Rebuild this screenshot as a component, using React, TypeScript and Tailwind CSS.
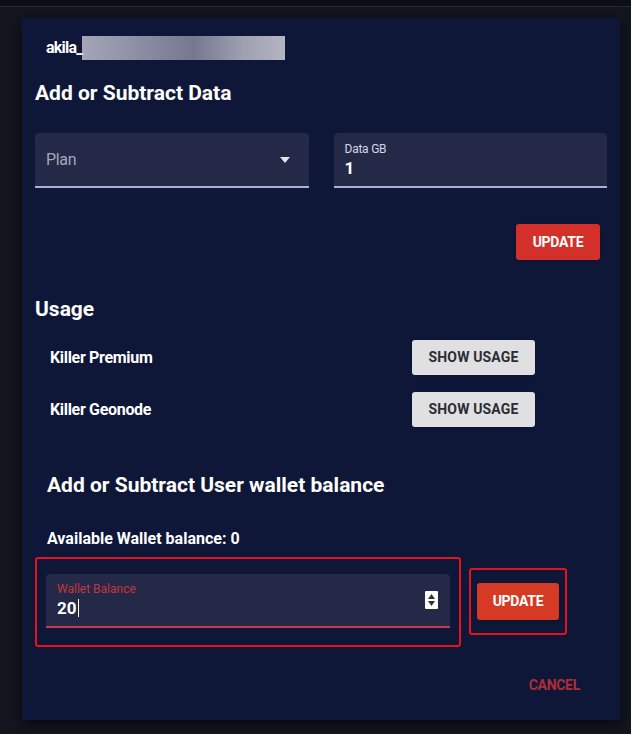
const usage = ["Killer Premium", "Killer Geonode"];

function Spinner() {
  return (
    <div className="flex h-[18px] w-[13px] flex-col items-center justify-center gap-[2px] rounded-[1px] bg-white">
      <svg width="7" height="5" viewBox="0 0 7 5">
        <path d="M3.5 0L7 5H0z" fill="#333" />
      </svg>
      <svg width="7" height="5" viewBox="0 0 7 5">
        <path d="M0 0h7L3.5 5z" fill="#333" />
      </svg>
    </div>
  );
}

export default function App() {
  return (
    <div
      className="flex h-[734px] w-[631px] flex-col bg-[#13151f] text-white"
      style={{ fontFamily: "Roboto, 'Liberation Sans', sans-serif" }}
    >
      <div className="h-[7px] border-b border-[#262a36] bg-[#0c0e15]" />
      <div className="ml-[22px] mt-[11px] flex h-[702px] w-[598px] flex-col bg-[#0f1738] px-[13px] shadow-[0_4px_12px_rgba(0,0,0,0.6)]">
        {/* user */}
        <div className="mt-[18px] flex items-center pl-[11px]">
          <span className="text-[16px] font-bold tracking-[-0.05em]">akila_</span>
          <div className="h-[24px] w-[203px] bg-[linear-gradient(90deg,#c9cad6,#a9abbd_30%,#8f90a6_55%,#c3c4d0_80%,#dcdce4)] opacity-80" />
        </div>

        <h2 className="mt-[19px] text-[21px] font-bold leading-[28px]">Add or Subtract Data</h2>

        <div className="mt-[26px] grid grid-cols-2 gap-[25px]">
          <div className="flex h-[55px] items-center justify-between rounded-t-[4px] border-b-2 border-[#a9b0d6] bg-[#232946] px-[11px]">
            <span className="text-[16px] tracking-[-0.02em] text-[#a3a7bd]">Plan</span>
            <svg width="10" height="6" viewBox="0 0 10 6" className="mr-[8px]">
              <path d="M0 0h10L5 6z" fill="#e6e6ee" />
            </svg>
          </div>
          <div className="flex h-[55px] flex-col justify-center rounded-t-[4px] border-b-2 border-[#a9b0d6] bg-[#232946] px-[11px]">
            <span className="text-[12px] leading-[14px] tracking-[-0.02em] text-[#d4d6e4]">Data GB</span>
            <span className="mt-[2px] text-[17px] font-bold leading-[20px]">1</span>
          </div>
        </div>

        <div className="mt-[36px] flex justify-end pr-[7px]">
          <button className="h-[36px] w-[84px] rounded-[3px] bg-[#d3302a] text-[14px] font-bold tracking-[-0.02em] text-white shadow">
            UPDATE
          </button>
        </div>

        <h2 className="mt-[35px] text-[21px] font-bold leading-[28px]">Usage</h2>

        <div className="mt-[17px] flex flex-col gap-[17px] pl-[15px]">
          {usage.map((u) => (
            <div key={u} className="flex items-center">
              <span className="w-[362px] text-[16px] font-bold tracking-[-0.02em]">{u}</span>
              <button className="h-[35px] w-[123px] rounded-[3px] bg-[#e0e0e2] text-[14px] font-bold tracking-[0.01em] text-[#2c2c33] shadow">
                SHOW USAGE
              </button>
            </div>
          ))}
        </div>

        <h2 className="mt-[44px] pl-[12px] text-[21px] font-bold leading-[28px]">
          Add or Subtract User wallet balance
        </h2>

        <p className="mt-[30px] pl-[12px] text-[16px] font-bold leading-[20px]">Available Wallet balance: 0</p>

        <div className="mt-[8px] flex items-start">
          <div className="h-[90px] w-[426px] rounded-[3px] border-2 border-[#e3121c] px-[9px] pt-[15px]">
            <div className="flex h-[54px] items-center justify-between rounded-t-[4px] border-b-2 border-[#c8384a] bg-[#232946] pl-[11px] pr-[12px]">
              <div className="flex flex-col">
                <span className="text-[12px] leading-[14px] text-[#c8343e]">Wallet Balance</span>
                <span className="mt-[2px] flex items-center text-[17px] font-bold leading-[20px]">
                  20<span className="ml-[1px] h-[18px] w-[1px] bg-white" />
                </span>
              </div>
              <Spinner />
            </div>
          </div>
          <div className="ml-[8px] mt-[11px] flex h-[67px] w-[98px] items-center justify-center rounded-[3px] border-2 border-[#e3121c]">
            <button className="h-[37px] w-[82px] rounded-[3px] bg-[#d63a25] text-[14px] font-bold tracking-[-0.02em] text-white shadow">
              UPDATE
            </button>
          </div>
        </div>

        <div className="mt-[28px] flex justify-end pr-[27px]">
          <span className="text-[14px] font-bold tracking-[-0.02em] text-[#b02c36]">CANCEL</span>
        </div>
      </div>
    </div>
  );
}
